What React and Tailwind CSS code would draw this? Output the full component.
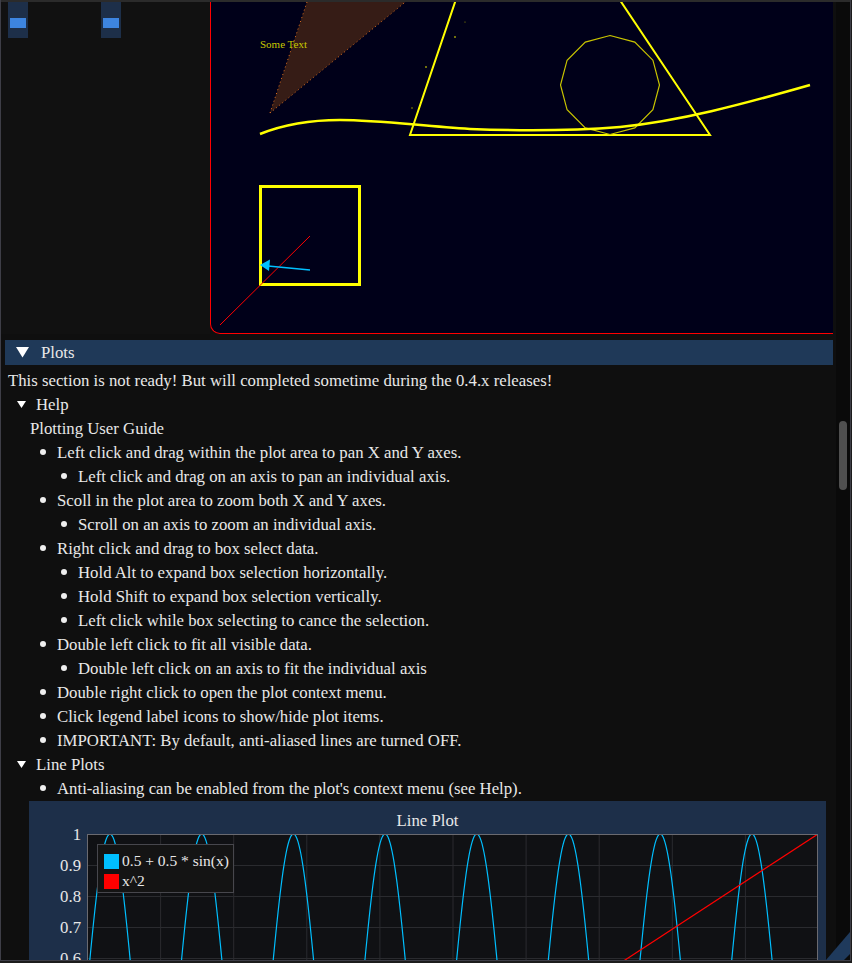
import React from 'react';

const GUIDE = [
  [1, 'Left click and drag within the plot area to pan X and Y axes.'],
  [2, 'Left click and drag on an axis to pan an individual axis.'],
  [1, 'Scoll in the plot area to zoom both X and Y axes.'],
  [2, 'Scroll on an axis to zoom an individual axis.'],
  [1, 'Right click and drag to box select data.'],
  [2, 'Hold Alt to expand box selection horizontally.'],
  [2, 'Hold Shift to expand box selection vertically.'],
  [2, 'Left click while box selecting to cance the selection.'],
  [1, 'Double left click to fit all visible data.'],
  [2, 'Double left click on an axis to fit the individual axis'],
  [1, 'Double right click to open the plot context menu.'],
  [1, 'Click legend label icons to show/hide plot items.'],
  [1, 'IMPORTANT: By default, anti-aliased lines are turned OFF.'],
];

const Y_TICKS = ['1', '0.9', '0.8', '0.7', '0.6'];

function Arrow({ big }) {
  return big ? (
    <svg width="13" height="11" viewBox="0 0 13 11" className="shrink-0">
      <polygon points="0,0 13,0 6.5,10.5" fill="#ffffff" />
    </svg>
  ) : (
    <svg width="9" height="8" viewBox="0 0 9 8" className="shrink-0">
      <polygon points="0,0 9,0 4.5,7" fill="#ffffff" />
    </svg>
  );
}

function Bullet({ level, children }) {
  return (
    <div className={`flex h-[24px] items-center ${level === 1 ? 'pl-[39px] gap-[11px]' : 'pl-[60px] gap-[11px]'}`}>
      <span className="w-[6px] h-[6px] rounded-full bg-[#eeeeee] shrink-0 -mt-[2px]" />
      <span>{children}</span>
    </div>
  );
}

function Canvas() {
  // 12-gon
  const gon = Array.from({ length: 12 }, (_, i) => {
    const a = (i / 12) * Math.PI * 2;
    return `${(610 + Math.sin(a) * 49.5).toFixed(1)},${(85 - Math.cos(a) * 49.5).toFixed(1)}`;
  }).join(' ');

  return (
    <div className="relative flex-1 bg-[#000019] border-l border-b border-[#ff0000] rounded-bl-[10px] overflow-hidden">
      <svg className="absolute inset-0" width="621" height="331" viewBox="211 2 621 331">
        <polygon points="270,113 311,-10 420,-10" fill="#361c16" />
        <line x1="270" y1="113" x2="311" y2="-10" stroke="#e07020" strokeWidth="1" strokeDasharray="1 3" />
        <line x1="270" y1="113" x2="420" y2="-10" stroke="#e07020" strokeWidth="1" strokeDasharray="1 3" />
        <text x="260" y="48" fontSize="11" fill="#c8c800" fontFamily="Liberation Serif, serif">Some Text</text>

        <polygon points="511,-163 410,135 710,135" fill="none" stroke="#ffff00" strokeWidth="2" />
        <polygon points={gon} fill="none" stroke="#c8c400" strokeWidth="1.2" />
        <path
          d="M260,134 C285,124 310,120 340,120 C380,120 420,126 470,129 C520,131 570,131 620,127 C680,121 740,105 810,85"
          fill="none"
          stroke="#ffff00"
          strokeWidth="2.5"
        />
        <circle cx="455" cy="37" r="0.8" fill="#ffff00" />
        <circle cx="426" cy="67" r="0.8" fill="#ffff00" />
        <circle cx="412" cy="108" r="0.8" fill="#9a9a00" />
        <circle cx="465" cy="22" r="0.6" fill="#9a9a00" />

        <rect x="260.5" y="186.5" width="99" height="98" fill="none" stroke="#ffff00" strokeWidth="3" />
        <line x1="220" y1="325" x2="310" y2="236" stroke="#ff0000" strokeWidth="1" />
        <line x1="310" y1="270" x2="268" y2="266" stroke="#00bfff" strokeWidth="1.3" />
        <polygon points="260,265 270,259.5 269,271" fill="#00bfff" />
      </svg>
    </div>
  );
}

function LinePlot() {
  const W = 731;
  const H = 170;
  let d = '';
  for (let x = 0; x <= W; x += 1) {
    const v = 0.5 + 0.5 * Math.cos((2 * Math.PI * (x - 23)) / 91.7);
    const y = (1 - v) * 310;
    d += `${x === 0 ? 'M' : 'L'}${x},${y.toFixed(1)} `;
  }

  return (
    <div className="ml-[28px] w-[797px] bg-[#1d2f49] h-[200px]">
      <div className="h-[33px] pt-[8px] text-center leading-[24px]">Line Plot</div>
      <div className="flex">
        <div className="relative w-[58px] shrink-0">
          {Y_TICKS.map((t, i) => (
            <span
              key={t}
              className="absolute right-[6px] leading-[20px]"
              style={{ top: i * 31 - 9 }}
            >
              {t}
            </span>
          ))}
        </div>
        <div className="relative">
          <svg width={W} height={H} viewBox={`0 0 ${W} ${H}`} className="block">
            <defs>
              <clipPath id="plotclip">
                <rect x="0" y="0" width={W} height={H} />
              </clipPath>
            </defs>
            <rect x="0" y="0" width={W} height={H} fill="#101114" />
            {[0, 1, 2, 3, 4, 5, 6, 7, 8, 9].map((k) => (
              <line key={k} x1={73.1 * k + 0.5} y1="0" x2={73.1 * k + 0.5} y2={H} stroke="#2a2b2f" strokeWidth="1" />
            ))}
            {[1, 2, 3, 4].map((k) => (
              <line key={k} x1="0" y1={31 * k + 0.5} x2={W} y2={31 * k + 0.5} stroke="#2a2b2f" strokeWidth="1" />
            ))}
            <g clipPath="url(#plotclip)">
              <path d={d} fill="none" stroke="#00bfff" strokeWidth="1.2" />
              <line x1={W} y1="0" x2="486" y2="160" stroke="#ff0000" strokeWidth="1.2" />
            </g>
            <rect x="0.5" y="0.5" width={W - 1} height={H} fill="none" stroke="#6a6a70" strokeWidth="1" />
          </svg>
          <div className="absolute left-[10px] top-[10px] w-[137px] h-[49px] bg-[#141414] border border-[#47474d] pl-[6px] pt-[6px] flex flex-col text-[15.5px]">
            <div className="flex items-center h-[20px] gap-[3px]">
              <span className="w-[15px] h-[15px] bg-[#00bfff]" />
              <span className="leading-[20px]">0.5 + 0.5 * sin(x)</span>
            </div>
            <div className="flex items-center h-[20px] gap-[3px]">
              <span className="w-[15px] h-[15px] bg-[#ff0000]" />
              <span className="leading-[20px]">x^2</span>
            </div>
          </div>
        </div>
      </div>
    </div>
  );
}

export default function App() {
  return (
    <div className="w-[852px] h-[963px] bg-[#1c1c1c] overflow-hidden font-['Liberation_Serif',serif] text-[16.75px] text-[#e8e8e8]">
      <div className="relative w-[851px] h-[961px] bg-[#0f0f0f] border-l border-r border-b border-[#3e3e47] flex flex-col overflow-hidden">
        <div className="h-[2px] bg-[#2b2b2b] shrink-0" />
        <div className="flex flex-1 min-h-0">
          {/* Main column */}
          <div className="flex-1 pr-[3px] flex flex-col overflow-hidden">
            <div className="flex h-[332px] shrink-0">
              <div className="w-[209px] bg-[#111111] flex items-start">
                <div className="ml-[7px] w-[20px] h-[36px] bg-[#1d2f49] px-[2px] pt-[16px]">
                  <div className="h-[10px] bg-[#3d85e0]" />
                </div>
                <div className="ml-[73px] w-[20px] h-[36px] bg-[#1d2f49] px-[2px] pt-[16px]">
                  <div className="h-[10px] bg-[#3d85e0]" />
                </div>
              </div>
              <Canvas />
            </div>

            <div className="mt-[6px] ml-[4px] h-[25px] bg-[#1f3958] flex items-center pl-[11px] gap-[12px] shrink-0">
              <Arrow big />
              <span>Plots</span>
            </div>

            <div className="mt-[4px] flex flex-col">
              <div className="h-[24px] flex items-center pl-[7px]">
                This section is not ready! But will completed sometime during the 0.4.x releases!
              </div>
              <div className="h-[24px] flex items-center pl-[16px] gap-[10px]">
                <Arrow />
                <span>Help</span>
              </div>
              <div className="h-[24px] flex items-center pl-[29px]">Plotting User Guide</div>
              {GUIDE.map(([lvl, text]) => (
                <Bullet key={text} level={lvl}>
                  {text}
                </Bullet>
              ))}
              <div className="h-[24px] flex items-center pl-[16px] gap-[10px]">
                <Arrow />
                <span>Line Plots</span>
              </div>
              <Bullet level={1}>Anti-aliasing can be enabled from the plot's context menu (see Help).</Bullet>
              <LinePlot />
            </div>
          </div>

          {/* Scrollbar */}
          <div className="w-[14px] bg-[#0a0a0a] pt-[419px] px-[3px] shrink-0">
            <div className="h-[69px] rounded-full bg-[#4f4f4f]" />
          </div>
        </div>

        {/* resize grip */}
        <svg className="absolute right-0 bottom-0" width="24" height="28" viewBox="0 0 24 28">
          <polygon points="0,28 24,0 24,22 18,28" fill="#1f3a5c" />
        </svg>
      </div>
    </div>
  );
}
